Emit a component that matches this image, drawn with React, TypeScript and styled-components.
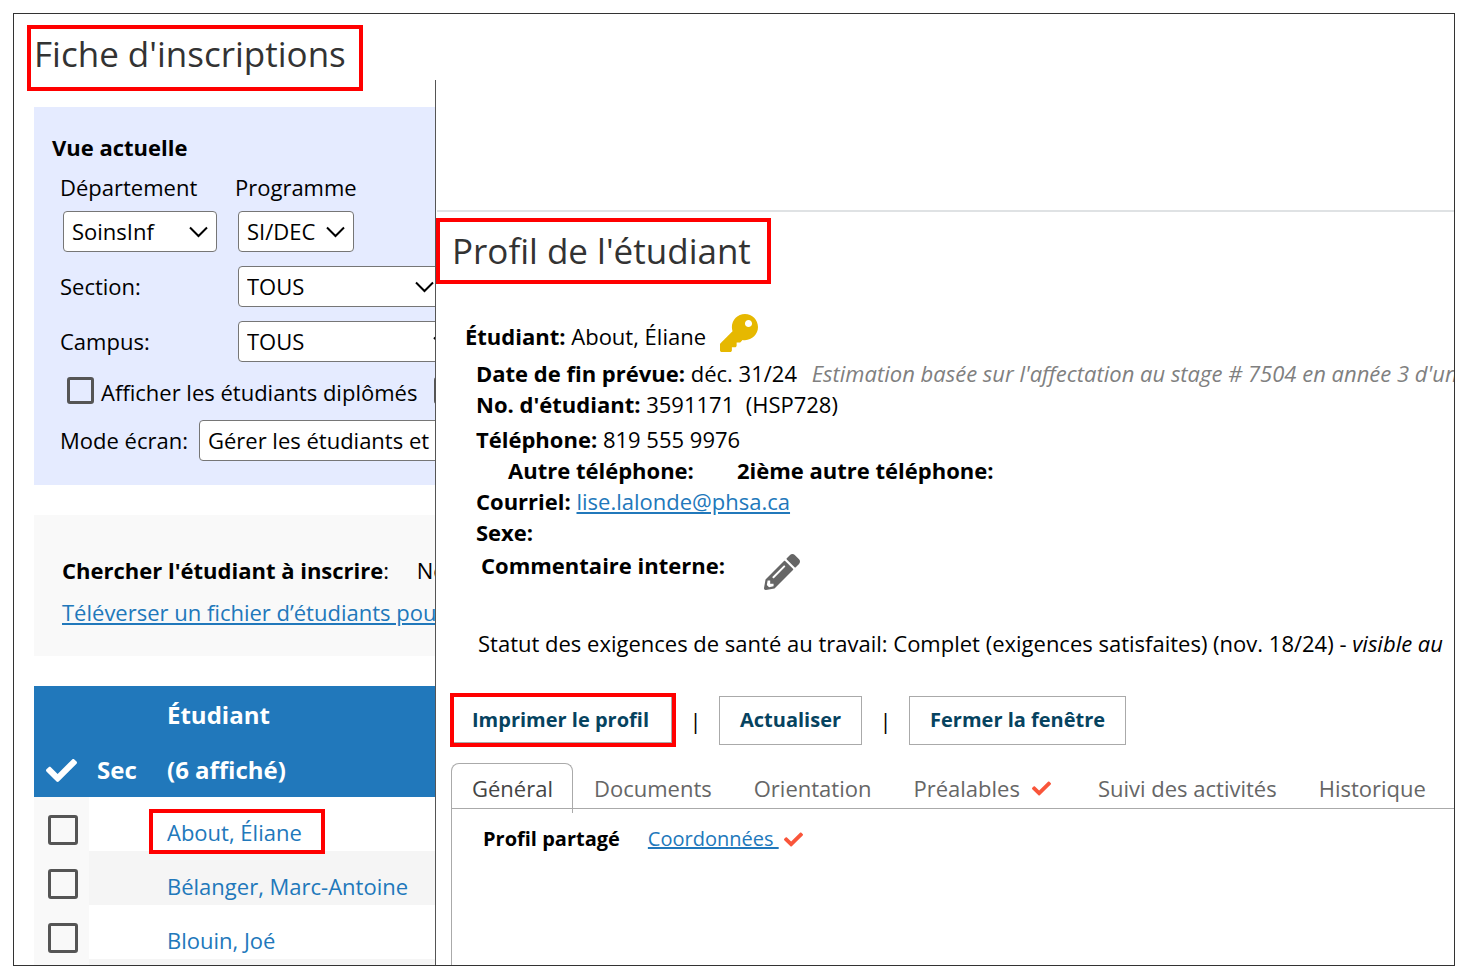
import React from "react";
import styled, { createGlobalStyle, css } from "styled-components";
import { FaCheck, FaKey, FaPencilAlt } from "react-icons/fa";

const blue = "#2178bb";
const ink = "#555";

const GlobalStyle = createGlobalStyle`
  * { box-sizing: border-box; }
  body {
    margin: 0;
    background: #fff;
    color: #000;
    font: 400 22px/31px "Open Sans", "Noto Sans", sans-serif;
  }
  a { color: ${blue}; }
`;

const Frame = styled.main`
  display: flex;
  height: calc(100vh - 27px);
  margin: 13px 10px 14px 13px;
  border: 1px solid #333;
  overflow: hidden;
`;

const ListPane = styled.section`
  flex: 0 0 421px;
  min-width: 0;
  overflow: hidden;
`;

const ProfilePane = styled.section`
  flex: 1;
  min-width: 0;
  display: flex;
  flex-direction: column;
  margin-top: 66px;
  border-left: 1px solid #555;
  overflow: hidden;
  white-space: nowrap;
`;

const Heading = styled.h1<{ $inset?: boolean }>`
  width: max-content;
  height: 66px;
  margin: ${(p) => (p.$inset ? "6px 0 0" : "11px 0 0 13px")};
  padding: ${(p) => (p.$inset ? "5px 16px 0 12px" : "1px 13px 0 3px")};
  border: 4px solid #f00;
  color: #333;
  font-size: 35px;
  font-weight: 400;
  line-height: 48px;
  white-space: nowrap;
`;

const Filters = styled.form`
  margin: 16px 0 0 20px;
  padding: 24px 0 23px 26px;
  background: #e5ebff;
  white-space: nowrap;
`;

const FiltersTitle = styled.h2`
  margin: 0 0 9px -8px;
  font-size: 22px;
  line-height: 32px;
`;

const FieldGrid = styled.div`
  display: grid;
  grid-template-columns: 175px auto;
  align-items: center;
  row-gap: 14px;
`;

const Field = styled.div`
  display: flex;
  flex-direction: column;
  gap: 8px;
`;

const Line = styled.div`
  display: flex;
  align-items: center;
  height: 44px;
  gap: 11px;
`;

const SelectBox = styled.span<{ $width: number; $flush?: boolean }>`
  position: relative;
  display: block;
  flex: none;
  width: ${(p) => p.$width}px;
  margin-left: ${(p) => (p.$flush ? 0 : 3)}px;
  svg {
    position: absolute;
    right: 9px;
    top: 15px;
    pointer-events: none;
  }
`;

const Select = styled.select`
  display: block;
  width: 100%;
  height: 41px;
  padding: 0 8px;
  border: 1px solid #767676;
  border-radius: 4px;
  appearance: none;
  background: #fff;
  color: #000;
  font: inherit;
`;

const Checkbox = styled.input.attrs({ type: "checkbox" })<{ $size: number }>`
  flex: none;
  display: block;
  width: ${(p) => p.$size}px;
  height: ${(p) => p.$size}px;
  margin: 0;
  border: 3px solid ${ink};
  border-radius: 3px;
  appearance: none;
`;

const CheckLine = styled.div`
  display: flex;
  gap: 7px;
  height: 56px;
  padding: 15px 0 0 7px;
  label { margin-right: 10px; }
`;

const Search = styled.section`
  margin: 30px 0 30px 20px;
  padding: 40px 0 28px 28px;
  background: #f9f9f9;
  white-space: nowrap;
  p { margin: 0 0 11px; }
  span { margin-left: 22px; }
`;

const Students = styled.table`
  width: 401px;
  margin-left: 20px;
  border-collapse: collapse;
  white-space: nowrap;
  th {
    padding: 1px 0 0;
    background: ${blue};
    color: #fff;
    font-size: 24px;
    line-height: 55px;
    text-align: left;
    vertical-align: bottom;
  }
  td { height: 54px; padding: 0; vertical-align: top; }
  th:first-child { width: 55px; padding-left: 12px; }
  th:nth-child(2) { width: 78px; padding-left: 8px; }
  td:first-child { padding: 18px 0 0 14px; background: #f9f9f9; }
  tbody tr:nth-child(even) { background: #f5f5f5; }
  td:last-child { padding-top: 19px; line-height: 32px; }
  th svg { display: block; margin-bottom: 11px; }
`;

const StudentLink = styled.a<{ $marked?: boolean }>`
  position: relative;
  text-decoration: none;
  ${(p) =>
    p.$marked &&
    css`
      &::after {
        content: "";
        position: absolute;
        inset: -8px -23px -7px -18px;
        border: 4px solid #f00;
      }
    `}
`;

const TopBar = styled.header`
  flex: none;
  height: 132px;
  margin-left: 1px;
  border-bottom: 2px solid #dfe2e4;
`;

const Details = styled.div`
  padding: 30px 0 0 40px;
`;

const Name = styled.div`
  display: flex;
  align-items: flex-end;
  height: 38px;
  margin: 0 0 6px -11px;
  gap: 14px;
`;

const Row = styled.div<{ $top?: number; $indent?: number }>`
  height: 31px;
  margin-top: ${(p) => p.$top ?? 0}px;
  padding-left: ${(p) => p.$indent ?? 0}px;
  b + b { margin-left: 43px; }
`;

const Comment = styled(Row)`
  display: flex;
  gap: 39px;
  svg { margin-top: 4px; flex: none; }
`;

const Note = styled.em`
  margin-left: 9px;
  color: #808080;
`;

const Actions = styled.div`
  display: flex;
  align-items: center;
  height: 54px;
  margin: 34px 0 0 14px;
`;

const Divider = styled.span`
  width: 47px;
  text-align: center;
`;

const Button = styled.button`
  height: 49px;
  padding: 0 20px;
  border: 1px solid #aaa;
  background: #fff;
  color: #06435f;
  font: 700 20px/28px "Open Sans", sans-serif;
`;

const Marked = styled.span`
  display: flex;
  margin-right: -4px;
  border: 4px solid #f00;
  button { height: 46px; padding: 0 22px 0 18px; border-width: 0 1px 1px 0; }
`;

const Tabs = styled.nav`
  flex: none;
  display: flex;
  gap: 1px;
  height: 45px;
  margin: 16px 0 0 15px;
`;

const Tab = styled.a<{ $active?: boolean }>`
  display: flex;
  align-items: center;
  gap: 12px;
  flex: none;
  height: 50px;
  padding: 0 20px;
  border: 1px solid transparent;
  border-width: 1px 1px 0 0;
  color: #666;
  text-decoration: none;
  svg { margin-right: 5px; }
  ${(p) =>
    p.$active &&
    css`
      padding-right: 19px;
      border-color: #aaa;
      border-left-width: 1px;
      border-radius: 8px 8px 0 0;
      color: #444;
    `}
`;

const TabPanel = styled.div`
  flex: 1;
  display: flex;
  align-items: flex-start;
  margin-left: 15px;
  padding: 16px 0 0 31px;
  border: 1px solid #aaa;
  border-width: 1px 0 0 1px;
  font-size: 20px;
  line-height: 28px;
  b { margin-right: 28px; }
  a { white-space: pre; }
  svg { margin: 5px 0 0 5px; }
`;

const Chevron = () => (
  <svg width="19" height="12" viewBox="0 0 19 12" fill="none" stroke="#000" strokeWidth="2">
    <path d="M1 1.5 9.5 10 18 1.5" />
  </svg>
);

type PickerProps = { id: string; value: string; width: number; flush?: boolean };

const Picker = ({ id, value, width, flush }: PickerProps) => (
  <SelectBox $width={width} $flush={flush}>
    <Select id={id} defaultValue={value}>
      <option>{value}</option>
    </Select>
    <Chevron />
  </SelectBox>
);

const students = ["About, Éliane", "Bélanger, Marc-Antoine", "Blouin, Joé", ""];

export default function App() {
  return (
    <>
      <GlobalStyle />
      <Frame>
        <ListPane>
          <Heading>Fiche d'inscriptions</Heading>
          <Filters>
            <FiltersTitle>Vue actuelle</FiltersTitle>
            <FieldGrid>
              <Field>
                <label htmlFor="dep">Département</label>
                <Picker id="dep" value="SoinsInf" width={154} />
              </Field>
              <Field>
                <label htmlFor="prog">Programme</label>
                <Picker id="prog" value="SI/DEC" width={116} />
              </Field>
              <label htmlFor="section">Section:</label>
              <Picker id="section" value="TOUS" width={205} />
              <label htmlFor="campus">Campus:</label>
              <Picker id="campus" value="TOUS" width={223} />
            </FieldGrid>
            <CheckLine>
              <Checkbox id="grads" $size={27} />
              <label htmlFor="grads">Afficher les étudiants diplômés</label>
              <Checkbox $size={27} aria-labelledby="grads" />
            </CheckLine>
            <Line>
              <label htmlFor="mode">Mode écran:</label>
              <Picker id="mode" value="Gérer les étudiants et" width={320} flush />
            </Line>
          </Filters>
          <Search>
            <p>
              <b>Chercher l'étudiant à inscrire</b>: <span>No</span>
            </p>
            <a href="#televerser">Téléverser un fichier d’étudiants pour</a>
          </Search>
          <Students>
            <thead>
              <tr>
                <th>
                  <FaCheck size={31} />
                </th>
                <th>Sec</th>
                <th>
                  Étudiant
                  <br />
                  (6 affiché)
                </th>
              </tr>
            </thead>
            <tbody>
              {students.map((name, i) => (
                <tr key={i}>
                  <td>
                    <Checkbox $size={30} aria-label={name} />
                  </td>
                  <td />
                  <td>
                    <StudentLink href="#etudiant" $marked={i === 0}>
                      {name}
                    </StudentLink>
                  </td>
                </tr>
              ))}
            </tbody>
          </Students>
        </ListPane>

        <ProfilePane>
          <TopBar />
          <Heading as="h2" $inset>
            Profil de l'étudiant
          </Heading>
          <Details>
            <Name>
              <span>
                <b>Étudiant:</b> About, Éliane
              </span>
              <FaKey size={38} color="#e6b800" />
            </Name>
            <Row>
              <b>Date de fin prévue:</b> déc. 31/24 <Note>Estimation basée sur l'affectation au stage # 7504 en année 3 d'un</Note>
            </Row>
            <Row>
              <b>No. d'étudiant:</b> 3591171 &nbsp;(HSP728)
            </Row>
            <Row $top={4}>
              <b>Téléphone:</b> 819 555 9976
            </Row>
            <Row $indent={32}>
              <b>Autre téléphone:</b>
              <b>2ième autre téléphone:</b>
            </Row>
            <Row>
              <b>Courriel:</b> <a href="mailto:lise.lalonde@phsa.ca">lise.lalonde@phsa.ca</a>
            </Row>
            <Row>
              <b>Sexe:</b>
            </Row>
            <Comment $top={2} $indent={5}>
              <b>Commentaire interne:</b>
              <FaPencilAlt size={36} color="#666" />
            </Comment>
            <Row $top={47} $indent={2}>
              Statut des exigences de santé au travail: Complet (exigences satisfaites) (nov. 18/24) - <em>visible au</em>
            </Row>
          </Details>
          <Actions>
            <Marked>
              <Button type="button">Imprimer le profil</Button>
            </Marked>
            <Divider>|</Divider>
            <Button type="button">Actualiser</Button>
            <Divider>|</Divider>
            <Button type="button">Fermer la fenêtre</Button>
          </Actions>
          <Tabs>
            <Tab href="#general" $active>
              Général
            </Tab>
            <Tab href="#documents">Documents</Tab>
            <Tab href="#orientation">Orientation</Tab>
            <Tab href="#prealables">
              Préalables <FaCheck size={19} color="#f9553a" />
            </Tab>
            <Tab href="#suivi">Suivi des activités</Tab>
            <Tab href="#historique">Historique</Tab>
          </Tabs>
          <TabPanel>
            <b>Profil partagé</b>
            <a href="#coordonnees">{"Coordonnées "}</a>
            <FaCheck size={19} color="#f9553a" />
          </TabPanel>
        </ProfilePane>
      </Frame>
    </>
  );
}
